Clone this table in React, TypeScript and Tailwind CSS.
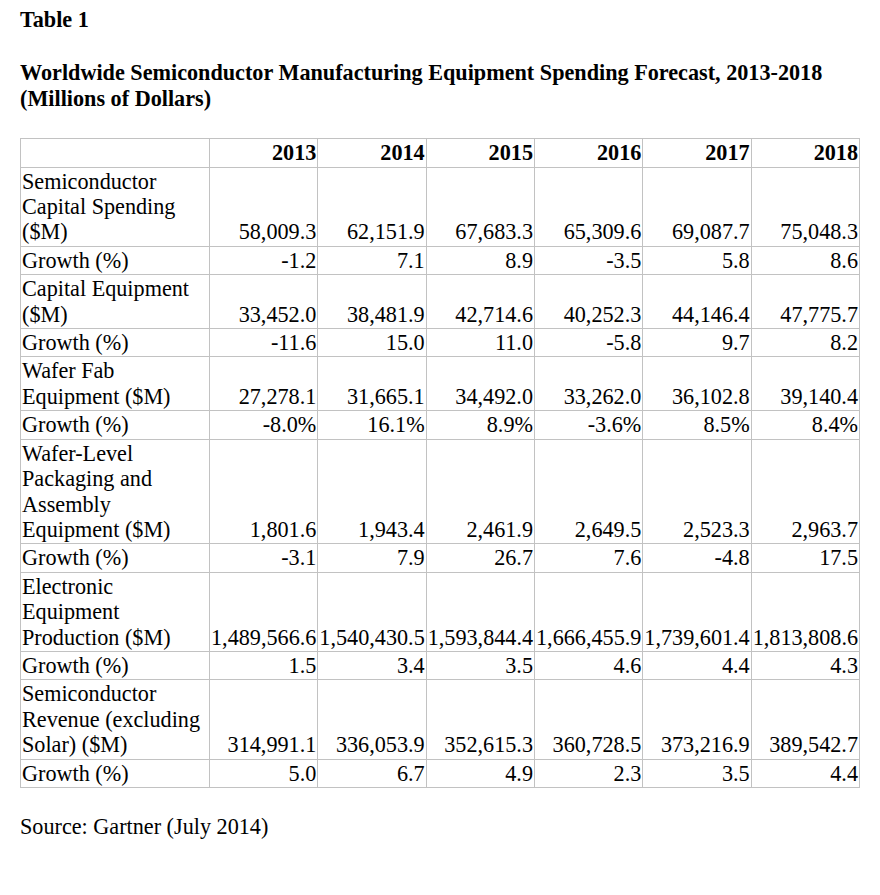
const years = ["2013", "2014", "2015", "2016", "2017", "2018"];

type Row = { label: string[]; values: string[] };

const rows: Row[] = [
  {
    label: ["Semiconductor", "Capital Spending", "($M)"],
    values: ["58,009.3", "62,151.9", "67,683.3", "65,309.6", "69,087.7", "75,048.3"],
  },
  { label: ["Growth (%)"], values: ["-1.2", "7.1", "8.9", "-3.5", "5.8", "8.6"] },
  {
    label: ["Capital Equipment", "($M)"],
    values: ["33,452.0", "38,481.9", "42,714.6", "40,252.3", "44,146.4", "47,775.7"],
  },
  { label: ["Growth (%)"], values: ["-11.6", "15.0", "11.0", "-5.8", "9.7", "8.2"] },
  {
    label: ["Wafer Fab", "Equipment ($M)"],
    values: ["27,278.1", "31,665.1", "34,492.0", "33,262.0", "36,102.8", "39,140.4"],
  },
  { label: ["Growth (%)"], values: ["-8.0%", "16.1%", "8.9%", "-3.6%", "8.5%", "8.4%"] },
  {
    label: ["Wafer-Level", "Packaging and", "Assembly", "Equipment ($M)"],
    values: ["1,801.6", "1,943.4", "2,461.9", "2,649.5", "2,523.3", "2,963.7"],
  },
  { label: ["Growth (%)"], values: ["-3.1", "7.9", "26.7", "7.6", "-4.8", "17.5"] },
  {
    label: ["Electronic", "Equipment", "Production ($M)"],
    values: ["1,489,566.6", "1,540,430.5", "1,593,844.4", "1,666,455.9", "1,739,601.4", "1,813,808.6"],
  },
  { label: ["Growth (%)"], values: ["1.5", "3.4", "3.5", "4.6", "4.4", "4.3"] },
  {
    label: ["Semiconductor", "Revenue (excluding", "Solar) ($M)"],
    values: ["314,991.1", "336,053.9", "352,615.3", "360,728.5", "373,216.9", "389,542.7"],
  },
  { label: ["Growth (%)"], values: ["5.0", "6.7", "4.9", "2.3", "3.5", "4.4"] },
];

const cell = "border border-[#c2c2c2] px-[1px] pt-[1px] pb-[1px]";

export default function App() {
  return (
    <div className="min-h-[895px] bg-white pl-[20px] pt-[7px] text-[22.2px] leading-[25.4px] text-black font-['Liberation_Serif','Times_New_Roman',serif]">
      <div className="font-bold">Table 1</div>

      <div className="mt-[28px] font-bold">
        <div>Worldwide Semiconductor Manufacturing Equipment Spending Forecast, 2013-2018</div>
        <div>(Millions of Dollars)</div>
      </div>

      <table className="mt-[27px] w-[840px] table-fixed border-collapse">
        <colgroup>
          <col className="w-[189px]" />
          {years.map((y) => (
            <col key={y} />
          ))}
        </colgroup>
        <thead>
          <tr>
            <th className={cell}></th>
            {years.map((y) => (
              <th key={y} className={`${cell} text-right align-bottom font-bold`}>
                {y}
              </th>
            ))}
          </tr>
        </thead>
        <tbody>
          {rows.map((row, i) => (
            <tr key={i}>
              <td className={`${cell} text-left align-top`}>
                {row.label.map((line, j) => (
                  <div key={j} className="whitespace-nowrap">
                    {line}
                  </div>
                ))}
              </td>
              {row.values.map((v, j) => (
                <td key={j} className={`${cell} text-right align-bottom whitespace-nowrap`}>
                  {v}
                </td>
              ))}
            </tr>
          ))}
        </tbody>
      </table>

      <div className="mt-[26px]">Source: Gartner (July 2014)</div>
    </div>
  );
}
